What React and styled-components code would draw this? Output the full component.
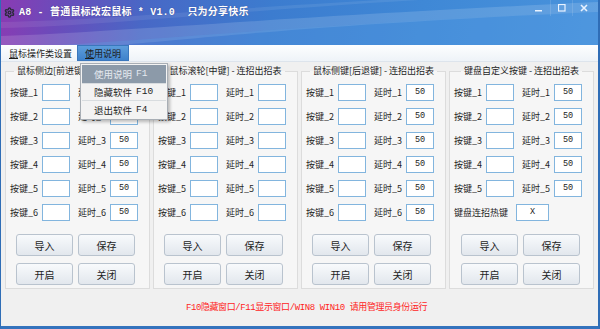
import React from 'react';
import styled, { createGlobalStyle } from 'styled-components';
import { Settings } from 'lucide-react';

const GlobalStyle = createGlobalStyle`
  html, body { margin: 0; padding: 0; background: #ffffff; }
  * { box-sizing: border-box; }
`;

const UI_FONT = `"Noto Sans CJK SC", "Liberation Sans", sans-serif`;
const MONO_FONT = `"Liberation Mono", "Noto Sans CJK SC", monospace`;

const Window = styled.div`
  width: 600px;
  height: 329px;
  position: relative;
  display: flex;
  flex-direction: column;
  background: #f0f0f0;
  border-left: 1px solid #2f6db6;
  border-right: 2px solid #2f6db6;
  border-bottom: 3px solid #3473bd;
  font-family: ${UI_FONT};
  overflow: hidden;
`;

const TitleBar = styled.div`
  height: 45px;
  flex: none;
  position: relative;
  display: flex;
  align-items: flex-start;
  padding: 6px 0 0 3px;
  background: linear-gradient(100deg, #8a3bb3 0%, #6a4cbb 10%, #4868c6 24%, #3c7ccf 45%, #3f88d6 70%, #4993dc 100%);
  overflow: hidden;
`;

const Wave = styled.svg`
  position: absolute;
  left: 0;
  top: 0;
  width: 100%;
  height: 100%;
  pointer-events: none;
`;

const Title = styled.div`
  position: relative;
  display: flex;
  align-items: center;
  gap: 4px;
  color: #ffffff;
  font-family: ${MONO_FONT};
  font-weight: bold;
  font-size: 10px;
  line-height: 13px;
  white-space: pre;
  letter-spacing: 0.2px;
  text-shadow: 0 0 1px rgba(40, 30, 90, 0.6);
`;

const Controls = styled.div`
  position: absolute;
  right: 4px;
  top: 0;
  display: flex;
`;

const ControlBtn = styled.div`
  width: 22px;
  height: 16px;
  display: flex;
  align-items: center;
  justify-content: center;
  color: #e8f2ff;
  border-left: ${(p) => (p.$sep ? '1px solid rgba(255,255,255,0.12)' : 'none')};
`;

const MenuBar = styled.div`
  height: 17px;
  flex: none;
  display: flex;
  align-items: stretch;
  padding-left: 3px;
  background: linear-gradient(#fdfeff, #eef3f8);
  border-bottom: 1px solid #dde4ec;
`;

const MenuItem = styled.div`
  padding: 0 ${(p) => (p.$active ? '7px' : '4px')};
  display: flex;
  align-items: center;
  font-size: 9px;
  color: #1d1d1d;
  background: ${(p) => (p.$active ? 'linear-gradient(#5c9ddc, #3f82cb)' : 'transparent')};
  border: ${(p) => (p.$active ? '1px solid #3a77bd' : '1px solid transparent')};
  u { text-decoration: underline; }
`;

const Content = styled.div`
  flex: none;
  height: 227px;
  display: flex;
  gap: 3px;
  padding: 3px 0 0 4px;
`;

const Group = styled.fieldset`
  width: 145px;
  margin: 0;
  padding: 0 0 3px 0;
  min-width: 0;
  border: 1px solid #dcdcdc;
  background: #f6f6f6;
  display: flex;
  flex-direction: column;
`;

const Legend = styled.legend`
  margin: 0 auto;
  padding: 0 3px;
  font-size: 9px;
  line-height: 12px;
  color: #1e1e1e;
  white-space: nowrap;
`;

const Rows = styled.div`
  display: flex;
  flex-direction: column;
  padding-top: 3px;
`;

const Row = styled.div`
  height: 24px;
  display: flex;
  align-items: center;
  padding-left: 4px;
`;

const Label = styled.span`
  width: ${(p) => p.$w || 32}px;
  margin-left: ${(p) => p.$gap || 0}px;
  font-size: 9px;
  color: #1e1e1e;
  white-space: nowrap;
`;

const Field = styled.div`
  width: ${(p) => p.$w || 28}px;
  height: 17px;
  background: #ffffff;
  border: 1px solid #82b5de;
  display: flex;
  align-items: center;
  justify-content: center;
  font-family: ${MONO_FONT};
  font-size: 8.5px;
  color: #222;
`;

const Buttons = styled.div`
  display: grid;
  grid-template-columns: 57px 57px;
  column-gap: 5px;
  row-gap: 7px;
  margin: 10px 0 0 ${(p) => p.$left || 10}px;
`;

const Button = styled.div`
  height: 22px;
  display: flex;
  align-items: center;
  justify-content: center;
  font-size: 10px;
  color: #1e1e1e;
  border: 1px solid #b9c3ce;
  border-radius: 3px;
  background: linear-gradient(#f8fafc, #e2e7ed);
`;

const Status = styled.div`
  flex: 1;
  display: flex;
  align-items: center;
  justify-content: center;
  padding-left: 14px;
  padding-bottom: 2px;
  font-family: ${MONO_FONT};
  font-size: 9px;
  color: #ff1e1e;
  letter-spacing: -0.4px;
`;

const Dropdown = styled.div`
  position: absolute;
  left: 79px;
  top: 63px;
  width: 88px;
  height: 57px;
  background: #f3f3f3;
  border: 1px solid #a8aeb5;
  box-shadow: 2px 2px 3px rgba(0, 0, 0, 0.25);
  padding: 1px;
  display: flex;
  flex-direction: column;
`;

const DropItem = styled.div`
  height: 18px;
  display: flex;
  align-items: center;
  padding-left: 12px;
  font-size: 9.5px;
  color: ${(p) => (p.$hover ? '#e4e9ef' : '#1e1e1e')};
  background: ${(p) => (p.$hover ? '#8c9aa9' : 'transparent')};
  border-top: ${(p) => (p.$sep ? '1px solid #d8dcdf' : 'none')};
  span { font-family: ${MONO_FONT}; margin-left: 4px; }
`;

const columns = [
  { title: '鼠标侧边[前进键] - 连招出招表', delays: ['50', '50', '50', '50', '50', '50'] },
  { title: '鼠标滚轮[中键] - 连招出招表', delays: ['', '', '', '', '', ''] },
  { title: '鼠标侧键[后退键] - 连招出招表', delays: ['50', '50', '50', '50', '50', '50'] },
  { title: '键盘自定义按键 - 连招出招表', delays: ['50', '50', '50', '50', '50'], hotkey: 'X' },
];

function Column({ col, index }) {
  const rows = col.delays.map((d, i) => (
    <Row key={i}>
      <Label>按键_{i + 1}</Label>
      <Field />
      <Label $gap={8}>延时_{i + 1}</Label>
      <Field>{d}</Field>
    </Row>
  ));
  return (
    <Group>
      <Legend>{col.title}</Legend>
      <Rows>
        {rows}
        {col.hotkey && (
          <Row>
            <Label $w={62}>键盘连招热键</Label>
            <Field $w={33}>{col.hotkey}</Field>
          </Row>
        )}
      </Rows>
      <Buttons $left={index === 3 ? 11 : 10}>
        <Button>导入</Button>
        <Button>保存</Button>
        <Button>开启</Button>
        <Button>关闭</Button>
      </Buttons>
    </Group>
  );
}

export default function App() {
  return (
    <>
      <GlobalStyle />
      <Window>
        <TitleBar>
          <Wave viewBox="0 0 600 45" preserveAspectRatio="none">
            <path d="M0 45 L0 36 C120 32 260 18 600 2 L600 12 C330 24 200 38 120 45 Z" fill="rgba(255,255,255,0.14)" />
            <path d="M60 45 C200 36 380 20 600 12 L600 45 Z" fill="rgba(90,160,230,0.3)" />
            <path d="M0 28 C100 26 220 12 420 0 L380 0 C220 9 100 20 0 22 Z" fill="rgba(255,255,255,0.08)" />
          </Wave>
          <Title>
            <Settings size={11} color="#2b2b3a" strokeWidth={3} />
            {'A8 - 普通鼠标改宏鼠标 * V1.0  只为分享快乐'}
          </Title>
          <Controls>
            <ControlBtn>
              <svg width="8" height="8" viewBox="0 0 8 8"><rect x="0" y="6" width="7" height="1.5" fill="currentColor" /></svg>
            </ControlBtn>
            <ControlBtn $sep>
              <svg width="8" height="8" viewBox="0 0 8 8"><rect x="0.5" y="0.5" width="6.5" height="6.5" fill="none" stroke="currentColor" strokeWidth="1.2" /></svg>
            </ControlBtn>
            <ControlBtn $sep>
              <svg width="8" height="8" viewBox="0 0 8 8"><path d="M1 1 L7 7 M7 1 L1 7" stroke="currentColor" strokeWidth="1.6" /></svg>
            </ControlBtn>
          </Controls>
        </TitleBar>
        <MenuBar>
          <MenuItem><span><u>鼠</u>标操作类设置</span></MenuItem>
          <MenuItem $active><span><u>使</u>用说明</span></MenuItem>
        </MenuBar>
        <Content>
          {columns.map((c, i) => (
            <Column key={i} col={c} index={i} />
          ))}
        </Content>
        <Status>F10隐藏窗口/F11显示窗口/WIN8 WIN10 请用管理员身份运行</Status>
        <Dropdown>
          <DropItem $hover>使用说明<span>F1</span></DropItem>
          <DropItem $sep>隐藏软件<span>F10</span></DropItem>
          <DropItem $sep>退出软件<span>F4</span></DropItem>
        </Dropdown>
      </Window>
    </>
  );
}
